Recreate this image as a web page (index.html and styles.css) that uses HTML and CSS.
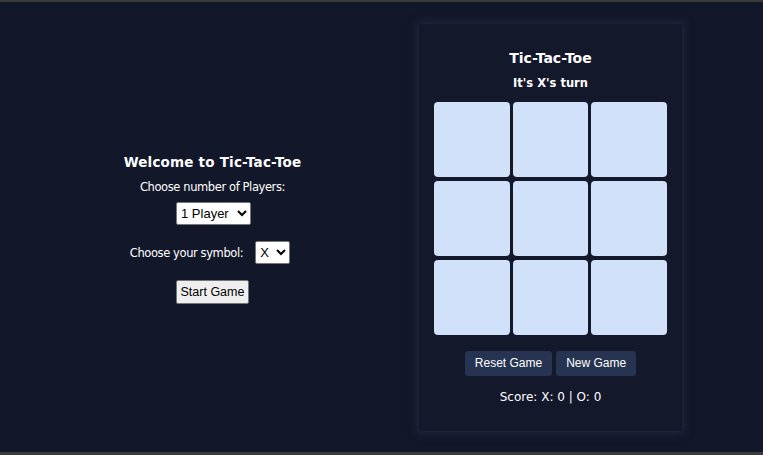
FILE: index.html
```html
<!DOCTYPE html>
<html>
<head>
<meta charset="utf-8">
<link rel="stylesheet" href="styles.css">
</head>
<body>
<div class="page">
  <div class="setup">
    <h2 class="welcome">Welcome to Tic-Tac-Toe</h2>
    <label class="lbl">Choose number of Players:</label>
    <select class="sel sel-players"><option>1 Player</option><option>2 Players</option></select>
    <div class="sym-row">
      <label class="lbl">Choose your symbol:</label>
      <select class="sel sel-sym"><option>X</option><option>O</option></select>
    </div>
    <button class="start">Start Game</button>
  </div>
  <div class="card">
    <h1 class="title">Tic-Tac-Toe</h1>
    <div class="turn">It's X's turn</div>
    <div class="board">
      <div class="cell"></div><div class="cell"></div><div class="cell"></div>
      <div class="cell"></div><div class="cell"></div><div class="cell"></div>
      <div class="cell"></div><div class="cell"></div><div class="cell"></div>
    </div>
    <div class="actions">
      <button class="act">Reset Game</button>
      <button class="act">New Game</button>
    </div>
    <div class="score">Score: X: 0 | O: 0</div>
  </div>
</div>
</body>
</html>
```
FILE: styles.css
```css
html { background: #3a3a3a; }
body {
  margin: 0;
  font-family: "Comic Sans MS", "DejaVu Sans", sans-serif;
  color: #ffffff;
}
.page {
  margin: 2px 0 3px;
  height: 450px;
  background: #13172a;
  display: flex;
  align-items: center;
}
.setup {
  box-sizing: border-box;
  width: 419px;
  padding-left: 6px;
  margin-top: 4px;
  display: flex;
  flex-direction: column;
  align-items: center;
}
.welcome {
  margin: 0 0 10px;
  font-size: 13.5px;
  font-weight: bold;
  letter-spacing: 0.2px;
}
.lbl {
  font-size: 11.5px;
  letter-spacing: -0.4px;
}
.sel {
  font-family: "Liberation Sans", Arial, sans-serif;
  font-size: 13px;
  height: 23px;
  background: #fff;
  color: #000;
  border: 1px solid #767676;
  border-radius: 2px;
}
.sel-players { margin-top: 8px; width: 75px; margin-left: 2px; }
.sym-row {
  display: flex;
  align-items: center;
  gap: 12px;
  margin-top: 16px;
  margin-left: -5px;
}
.sel-sym { width: 35px; }
.start {
  margin-top: 16px;
  font-family: "Liberation Sans", Arial, sans-serif;
  font-size: 12.5px;
  padding: 0 4px;
  height: 24px;
  background: #efefef;
  color: #000;
  border: 1px solid #767676;
  border-radius: 2px;
}
.card {
  width: 233px;
  padding: 15px;
  height: 377px;
  background: #14182b;
  box-shadow: 0 0 8px 2px rgba(45, 52, 80, 0.55);
  display: flex;
  flex-direction: column;
  align-items: center;
}
.title {
  margin: 11px 0 10px;
  font-size: 14px;
  font-weight: bold;
}
.turn {
  font-size: 11.5px;
  font-weight: bold;
  margin-bottom: 12px;
}
.board {
  width: 100%;
  display: grid;
  grid-template-columns: repeat(3, 1fr);
  grid-template-rows: repeat(3, 75px);
  gap: 4px 3px;
}
.cell {
  background: #d1e1f9;
  border-radius: 4px;
}
.actions {
  display: flex;
  gap: 4px;
  margin-top: 16px;
}
.act {
  font-family: "Liberation Sans", Arial, sans-serif;
  font-size: 12px;
  color: #fff;
  background: #263452;
  border: none;
  border-radius: 3px;
  height: 25px;
  padding: 0 10px;
}
.score {
  margin-top: 14px;
  font-size: 12px;
}
```
